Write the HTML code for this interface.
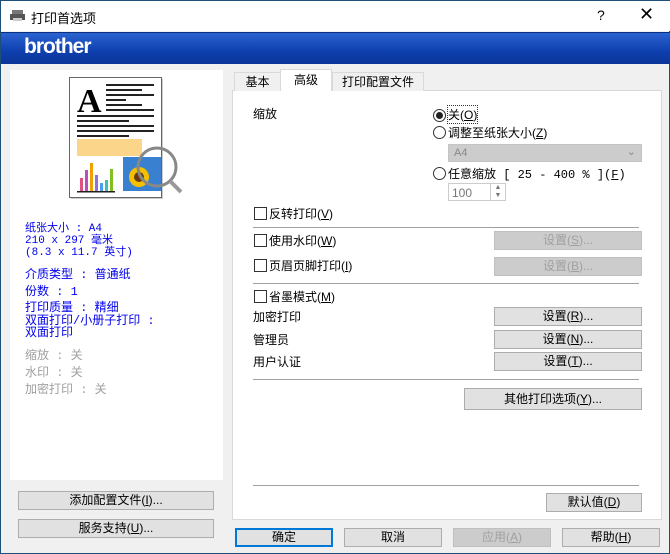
<!DOCTYPE html><html><head><meta charset="utf-8"><style>
*{margin:0;padding:0;box-sizing:border-box}
body{width:670px;height:554px;position:relative;overflow:hidden;background:#f0f0f0;font-family:"Liberation Sans","Noto Sans CJK SC",sans-serif;font-size:12px;color:#000;border:1px solid #1e4f78}
.a{position:absolute;white-space:nowrap}
.btn{position:absolute;background:#e1e1e1;border:1px solid #adadad;text-align:center;line-height:16px;font-size:12px}
.dis{color:#a0a0a0;background:#cccccc;border-color:#bfbfbf}
.cb{position:absolute;width:13px;height:13px;border:1px solid #333;background:#fff}
.rb{position:absolute;width:13px;height:13px;border:1px solid #333;border-radius:50%;background:#fff}
.sep{position:absolute;height:1px;background:#a0a0a0;left:252px;width:386px}
.bl{color:#0000ee}.gr{color:#a0a0a0}
.m{font-family:"Liberation Mono","Noto Sans CJK SC",monospace}
</style></head><body>
<div class="a" style="left:0;top:0;width:670px;height:30px;background:#fff"></div>
<svg class="a" style="left:9px;top:9px" width="16" height="12"><rect x="2" y="0" width="11" height="4" fill="#777"/><rect x="0" y="4" width="15" height="6" fill="#555"/><rect x="3" y="8" width="9" height="3" fill="#ccc"/></svg>
<div class="a" style="left:30px;top:7px;font-size:13px">打印首选项</div>
<div class="a" style="left:596px;top:6px;font-size:14px">?</div>
<div class="a" style="left:638px;top:3px;font-size:18px;font-weight:300">✕</div>
<div class="a" style="left:0;top:31px;width:670px;height:32px;background:linear-gradient(#2a63d0,#0e3fae 60%,#0a3598);border-top:1px solid #0a2f80"></div>
<div class="a" style="left:23px;top:34px;color:#fff;font-size:21px;font-weight:bold;letter-spacing:-1px">brother</div>
<div class="a" style="left:9px;top:69px;width:213px;height:410px;background:#fff"></div>
<svg class="a" style="left:68px;top:76px" width="120" height="125">
<rect x="2" y="2" width="92" height="120" fill="#ccc"/><rect x="0.5" y="0.5" width="92" height="120" fill="#fff" stroke="#666"/>
<text x="8" y="35" font-family="Liberation Serif" font-weight="bold" font-size="34">A</text>
<g fill="#222"><rect x="37" y="7" width="48" height="2"/><rect x="37" y="12" width="36" height="2"/><rect x="37" y="17" width="48" height="2"/><rect x="37" y="22" width="20" height="2"/><rect x="37" y="27" width="36" height="2"/><rect x="37" y="32" width="48" height="2"/><rect x="8" y="38" width="77" height="2"/><rect x="8" y="43" width="52" height="2"/><rect x="8" y="48" width="77" height="2"/><rect x="8" y="53" width="77" height="2"/><rect x="8" y="58" width="52" height="2"/></g>
<rect x="8" y="62" width="65" height="17" fill="#fbd68a"/>
<rect x="11" y="101" width="3" height="13" fill="#e05080"/><rect x="16" y="93" width="3" height="21" fill="#c04ac0"/><rect x="21" y="86" width="3" height="28" fill="#f0a000"/><rect x="26" y="98" width="3" height="16" fill="#9070e0"/><rect x="31" y="106" width="3" height="8" fill="#4aa0f0"/><rect x="36" y="103" width="3" height="11" fill="#40c0b0"/><rect x="41" y="92" width="3" height="22" fill="#80c020"/><rect x="8" y="114" width="38" height="1.5" fill="#222"/>
<rect x="54" y="80" width="38" height="34" fill="#3a80d0"/><circle cx="70" cy="100" r="10" fill="#f5c000"/><circle cx="70" cy="100" r="5" fill="#6a3a10"/>
<circle cx="88" cy="90" r="19" fill="none" stroke="#888" stroke-width="3"/><line x1="101" y1="104" x2="112" y2="115" stroke="#999" stroke-width="4"/>
</svg>
<div class="a bl m" style="left:24px;top:222px;font-size:11px;line-height:12px">纸张大小 : A4<br>210 x 297 毫米<br>(8.3 x 11.7 英寸)</div>
<div class="a bl m" style="left:24px;top:264px">介质类型 : 普通纸</div>
<div class="a bl m" style="left:24px;top:281px">份数 : 1</div>
<div class="a bl m" style="left:24px;top:297px">打印质量 : 精细</div>
<div class="a bl m" style="left:24px;top:314px;line-height:12px">双面打印/小册子打印 :<br>双面打印</div>
<div class="a gr m" style="left:24px;top:345px">缩放 : 关</div>
<div class="a gr m" style="left:24px;top:362px">水印 : 关</div>
<div class="a gr m" style="left:24px;top:379px">加密打印 : 关</div>
<div class="btn" style="left:17px;top:490px;width:196px;height:19px">添加配置文件(<u>I</u>)...</div>
<div class="btn" style="left:17px;top:518px;width:196px;height:19px">服务支持(<u>U</u>)...</div>
<div class="a" style="left:231px;top:89px;width:430px;height:430px;background:#fff;border:1px solid #d9d9d9"></div>
<div class="a" style="left:233px;top:71px;width:47px;height:19px;border:1px solid #d9d9d9;border-bottom:none;background:#f0f0f0;text-align:center;line-height:18px">基本</div>
<div class="a" style="left:279px;top:68px;width:52px;height:22px;border:1px solid #d9d9d9;border-bottom:none;background:#fff;text-align:center;line-height:20px">高级</div>
<div class="a" style="left:331px;top:71px;width:92px;height:19px;border:1px solid #d9d9d9;border-bottom:none;background:#f0f0f0;text-align:center;line-height:18px">打印配置文件</div>
<div class="a" style="left:252px;top:104px">缩放</div>
<div class="rb" style="left:432px;top:108px"><div style="width:7px;height:7px;border-radius:50%;background:#222;margin:2px"></div></div>
<div class="a" style="left:447px;top:105px;outline:1px dotted #333">关(<u>O</u>)</div>
<div class="rb" style="left:432px;top:125px"></div><div class="a" style="left:447px;top:123px">调整至纸张大小(<u>Z</u>)</div>
<div class="a" style="left:447px;top:143px;width:194px;height:18px;background:#ccc;border:1px solid #c4c4c4;color:#888;font-size:11px;padding:2px 5px">A4<span style="position:absolute;right:5px;top:0px">⌄</span></div>
<div class="rb" style="left:432px;top:166px"></div><div class="a m" style="left:447px;top:164px">任意缩放 [ 25 - 400 % ](<u>F</u>)</div>
<div class="a" style="left:447px;top:182px;width:58px;height:18px;border:1px solid #ccc;color:#777;padding:2px 3px">100<span style="position:absolute;left:41px;top:0;width:15px;height:16px;border-left:1px solid #ccc;font-size:7px;line-height:8px;text-align:center">▲<br>▼</span></div>
<div class="cb" style="left:253px;top:206px"></div><div class="a" style="left:268px;top:204px">反转打印(<u>V</u>)</div>
<div class="sep" style="top:226px"></div>
<div class="cb" style="left:253px;top:233px"></div><div class="a" style="left:268px;top:231px">使用水印(<u>W</u>)</div>
<div class="btn dis" style="left:493px;top:230px;width:148px;height:19px">设置(<u>S</u>)...</div>
<div class="cb" style="left:253px;top:258px"></div><div class="a" style="left:268px;top:256px">页眉页脚打印(<u>I</u>)</div>
<div class="btn dis" style="left:493px;top:256px;width:148px;height:19px">设置(<u>B</u>)...</div>
<div class="sep" style="top:282px"></div>
<div class="cb" style="left:253px;top:289px"></div><div class="a" style="left:268px;top:287px">省墨模式(<u>M</u>)</div>
<div class="a" style="left:252px;top:307px">加密打印</div><div class="btn" style="left:493px;top:306px;width:148px;height:19px">设置(<u>R</u>)...</div>
<div class="a" style="left:252px;top:330px">管理员</div><div class="btn" style="left:493px;top:329px;width:148px;height:19px">设置(<u>N</u>)...</div>
<div class="a" style="left:252px;top:352px">用户认证</div><div class="btn" style="left:493px;top:351px;width:148px;height:19px">设置(<u>T</u>)...</div>
<div class="sep" style="top:378px"></div>
<div class="btn" style="left:463px;top:387px;width:178px;height:22px;line-height:20px">其他打印选项(<u>Y</u>)...</div>
<div class="sep" style="top:484px"></div>
<div class="btn" style="left:545px;top:492px;width:96px;height:19px">默认值(<u>D</u>)</div>
<div class="btn" style="left:234px;top:527px;width:98px;height:19px;border:2px solid #0078d7;line-height:15px">确定</div>
<div class="btn" style="left:343px;top:527px;width:98px;height:19px">取消</div>
<div class="btn dis" style="left:452px;top:527px;width:98px;height:19px">应用(<u>A</u>)</div>
<div class="btn" style="left:561px;top:527px;width:98px;height:19px">帮助(<u>H</u>)</div>
</body></html>
